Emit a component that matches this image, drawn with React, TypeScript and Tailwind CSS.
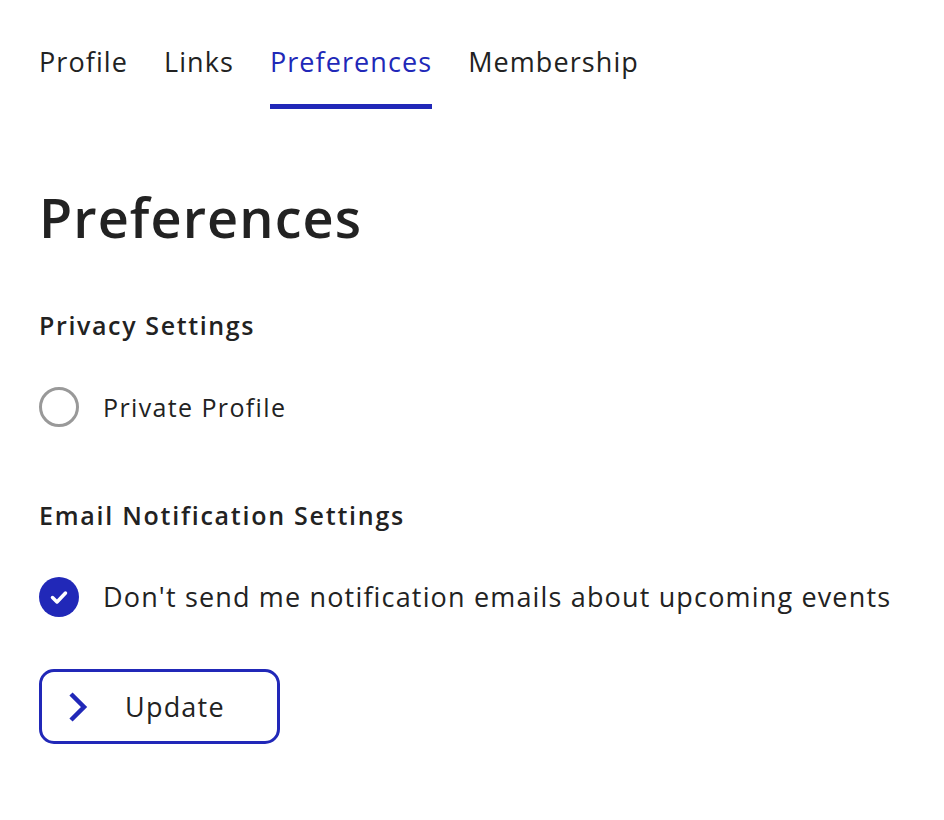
import { useState } from "react"

const tabs = ["Profile", "Links", "Preferences", "Membership"]

export default function App() {
  const [isPrivate, setIsPrivate] = useState(false)
  const [noEmails, setNoEmails] = useState(true)

  return (
    <div className="min-h-screen bg-white text-[#222] font-['Open_Sans',sans-serif] px-[39px]">
      <nav className="flex gap-[36px] pt-[42px]">
        {tabs.map((t) => (
          <div key={t} className="flex flex-col">
            <span className={`text-[27px] leading-[40px] tracking-[0.04em] ${t === "Preferences" ? "text-[#2128b8]" : ""}`}>{t}</span>
            <div className={`h-[5px] mt-[22px] ${t === "Preferences" ? "bg-[#2128b8]" : ""}`} />
          </div>
        ))}
      </nav>

      <h1 className="text-[54px] font-semibold leading-[56px] tracking-[0.02em] mt-[80px]">Preferences</h1>

      <h2 className="text-[25px] font-semibold mt-[62px] leading-[36px] tracking-[0.065em]">Privacy Settings</h2>
      <label className="flex items-center gap-[24px] mt-[44px] cursor-pointer" onClick={() => setIsPrivate(!isPrivate)}>
        <span className="w-[40px] h-[40px] rounded-full border-[3px] border-[#999] flex items-center justify-center">
          {isPrivate && <span className="w-[20px] h-[20px] rounded-full bg-[#2128b8]" />}
        </span>
        <span className="text-[25px] leading-[40px] tracking-[0.055em]">Private Profile</span>
      </label>

      <h2 className="text-[25px] font-semibold mt-[70px] leading-[36px] tracking-[0.07em]">Email Notification Settings</h2>
      <label className="flex items-center gap-[24px] mt-[44px] cursor-pointer" onClick={() => setNoEmails(!noEmails)}>
        {noEmails ? (
          <span className="w-[40px] h-[40px] rounded-full bg-[#2128b8] flex items-center justify-center">
            <svg width="24" height="24" viewBox="0 0 24 24" fill="none">
              <path d="M5.5 12.5l4.5 4.5 8.5-9" stroke="white" strokeWidth="3.5" strokeLinecap="round" strokeLinejoin="round" />
            </svg>
          </span>
        ) : (
          <span className="w-[40px] h-[40px] rounded-full border-[3px] border-[#999]" />
        )}
        <span className="text-[27px] leading-[40px] tracking-[0.043em]">Don't send me notification emails about upcoming events</span>
      </label>

      <button className="mt-[52px] w-[241px] h-[75px] border-[3px] border-[#2128b8] rounded-[15px] flex items-center pl-[26px]">
        <svg width="20" height="30" viewBox="0 0 20 30" fill="none">
          <path d="M3 2l13 13-13 13" stroke="#2128b8" strokeWidth="4.5" />
        </svg>
        <span className="text-[27px] leading-[40px] tracking-[0.045em] ml-[37px]">Update</span>
      </button>
    </div>
  )
}
